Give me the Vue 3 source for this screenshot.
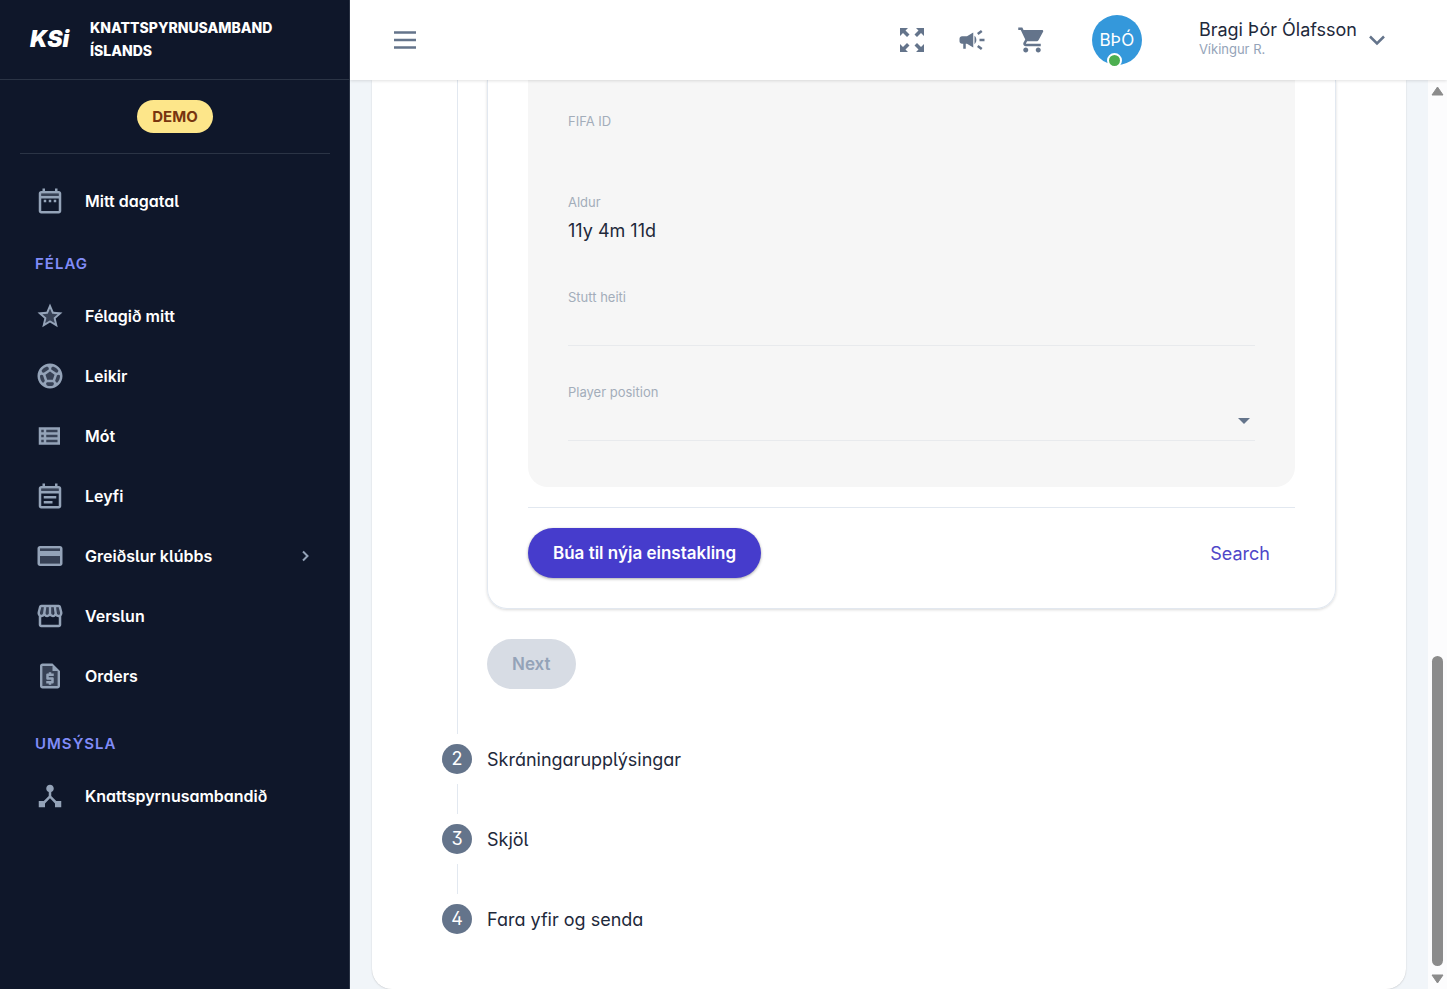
<script setup>
const icons = {
  date: {
    tone: 'M5 6h14v2H5z',
    line: 'M7 11h2v2H7v-2zm14-5v14c0 1.1-.9 2-2 2H5c-1.11 0-2-.9-2-2l.01-14c0-1.1.88-2 1.99-2h1V2h2v2h8V2h2v2h1c1.1 0 2 .9 2 2zM5 8h14V6H5v2zm14 12V10H5v10h14zm-4-7h2v-2h-2v2zm-4 0h2v-2h-2v2z'
  },
  star: {
    tone: 'M12 15.4l-3.76 2.27 1-4.28-3.32-2.88 4.38-.38L12 6.1l1.71 4.04 4.38.38-3.32 2.88 1 4.28z',
    line: 'M22 9.24l-7.19-.62L12 2 9.19 8.63 2 9.24l5.46 4.73L5.82 21 12 17.27 18.18 21l-1.63-7.03L22 9.24zM12 15.4l-3.76 2.27 1-4.28-3.32-2.88 4.38-.38L12 6.1l1.71 4.04 4.38.38-3.32 2.88 1 4.28L12 15.4z'
  },
  ball: {
    tone: 'M12 3a9 9 0 100 18 9 9 0 000-18z',
    line: 'M12 2C6.48 2 2 6.48 2 12s4.48 10 10 10 10-4.48 10-10S17.52 2 12 2zm1 3.3l1.35-.95c1.82.56 3.37 1.76 4.38 3.34l-.39 1.34-1.35.46L13 6.7V5.3zm-3.35-.95L11 5.3v1.4L7.01 9.49l-1.35-.46-.39-1.34c1.01-1.57 2.56-2.77 4.38-3.34zM7.08 17.11l-1.14.1C4.73 15.81 4 13.99 4 12c0-.12.01-.23.02-.35l1-.73 1.38.48 1.46 4.34-.78 1.37zm7.42 2.48c-.79.26-1.63.41-2.5.41s-1.71-.15-2.5-.41l-.69-1.49.64-1.1h5.11l.64 1.11-.7 1.48zM14.27 15H9.73l-1.35-4.02L12 8.44l3.63 2.54L14.27 15zm3.79 2.21l-1.14-.1-.79-1.37 1.46-4.34 1.39-.47 1 .73c.01.11.02.22.02.34 0 1.99-.73 3.81-1.94 5.21z'
  },
  list: {
    tone: 'M4 6h15v12H4z',
    line: 'M3 5v14h17V5H3zm4 2v2H5V7h2zm-2 6v-2h2v2H5zm0 2h2v2H5v-2zm13 2H9v-2h9v2zm0-4H9v-2h9v2zm0-4H9V7h9v2z'
  },
  note: {
    tone: 'M5 6h14v2H5z',
    line: 'M19 4h-1V2h-2v2H8V2H6v2H5c-1.11 0-2 .9-2 2v14c0 1.1.89 2 2 2h14c1.1 0 2-.9 2-2V6c0-1.1-.9-2-2-2zm0 16H5V10h14v10zm0-12H5V6h14v2zM7 12h10v2H7zm0 4h7v2H7z'
  },
  card: {
    tone: 'M4 6h16v12H4z',
    line: 'M20 4H4c-1.11 0-1.99.89-1.99 2L2 18c0 1.11.89 2 2 2h16c1.11 0 2-.89 2-2V6c0-1.11-.89-2-2-2zm0 14H4v-6h16v6zm0-10H4V6h16v2z'
  },
  shop: {
    tone: 'M5 5h2v5l-1 1H4zM9 5h2v5l-1 1H8zM13 5h2v5l-1 1h-1zM17 5h2l1 5-1 1h-1z',
    line: 'M21.9 8.89l-1.05-4.37c-.22-.9-1-1.52-1.91-1.52H5.05c-.9 0-1.69.63-1.9 1.52L2.1 8.89c-.24 1.02-.02 2.06.62 2.88.08.11.19.19.28.29V19c0 1.1.9 2 2 2h14c1.1 0 2-.9 2-2v-6.94c.09-.09.2-.18.28-.28.64-.82.87-1.87.62-2.89zm-2.99-3.9l1.05 4.37c.1.42.01.84-.25 1.17-.14.18-.44.47-.94.47-.61 0-1.14-.49-1.21-1.14L16.98 5l1.93-.01zM13 5h1.96l.54 4.52c.05.39-.07.78-.33 1.07-.22.26-.54.41-.95.41-.67 0-1.22-.59-1.22-1.31V5zM8.49 9.52L9.04 5H11v4.69c0 .72-.55 1.31-1.29 1.31-.34 0-.65-.15-.89-.41-.25-.29-.37-.68-.33-1.07zm-4.45-.16L5.05 5h1.97l-.58 4.86c-.08.65-.6 1.14-1.21 1.14-.49 0-.8-.29-.93-.47-.27-.32-.36-.75-.26-1.17zM5 19v-6.03c.08.01.15.03.23.03.87 0 1.66-.36 2.24-.95.6.6 1.4.95 2.31.95.87 0 1.65-.36 2.23-.93.59.57 1.39.93 2.29.93.84 0 1.64-.35 2.24-.95.58.59 1.37.95 2.24.95.08 0 .15-.02.23-.03V19H5z'
  },
  page: {
    tone: 'M6 4h8l4 4v12H6z',
    line: 'M14 2H6c-1.1 0-1.99.9-1.99 2L4 20c0 1.1.89 2 1.99 2H18c1.1 0 2-.9 2-2V8l-6-6zm4 18H6V4h8v4h4v12zM11 19h2v-1h1c.55 0 1-.45 1-1v-3c0-.55-.45-1-1-1h-3v-1h4v-2h-2V9h-2v1h-1c-.55 0-1 .45-1 1v3c0 .55.45 1 1 1h3v1H9v2h2v1z'
  },
  hub: {
    tone: '',
    line: 'M17 16l-4-4V8.82C14.16 8.4 15 7.3 15 6c0-1.66-1.34-3-3-3S9 4.34 9 6c0 1.3.84 2.4 2 2.82V12l-4 4H3v5h5v-3.05l4-4.2 4 4.2V21h5v-5h-4z'
  }
}

const groups = [
  { title: '', items: [{ label: 'Mitt dagatal', icon: 'date' }] },
  {
    title: 'FÉLAG',
    items: [
      { label: 'Félagið mitt', icon: 'star' },
      { label: 'Leikir', icon: 'ball' },
      { label: 'Mót', icon: 'list' },
      { label: 'Leyfi', icon: 'note' },
      { label: 'Greiðslur klúbbs', icon: 'card', expandable: true },
      { label: 'Verslun', icon: 'shop' },
      { label: 'Orders', icon: 'page' }
    ]
  },
  { title: 'UMSÝSLA', items: [{ label: 'Knattspyrnusambandið', icon: 'hub' }] }
]

const steps = [
  { number: 2, label: 'Skráningarupplýsingar' },
  { number: 3, label: 'Skjöl' },
  { number: 4, label: 'Fara yfir og senda' }
]
</script>

<template>
  <div class="shell">
    <aside class="sidebar">
      <div class="brand">
        <span class="logo">KSi</span>
        <span class="brand-name">KNATTSPYRNUSAMBAND ÍSLANDS</span>
      </div>
      <div class="env"><span class="pill">DEMO</span></div>
      <nav class="nav">
        <section v-for="group in groups" :key="group.title" class="group">
          <h2 v-if="group.title" class="group-title">{{ group.title }}</h2>
          <a v-for="item in group.items" :key="item.label" href="#" class="nav-item">
            <svg class="nav-icon" viewBox="0 0 24 24" aria-hidden="true">
              <path v-if="icons[item.icon].tone" :d="icons[item.icon].tone" opacity=".3" />
              <path :d="icons[item.icon].line" fill-rule="evenodd" />
            </svg>
            <span class="nav-label">{{ item.label }}</span>
            <svg v-if="item.expandable" class="nav-arrow" viewBox="0 0 20 20" aria-hidden="true">
              <path d="M8 5.500l4.500 4.500L8 14.500" />
            </svg>
          </a>
        </section>
      </nav>
    </aside>

    <div class="main">
      <header class="topbar">
        <button class="icon-button" type="button" aria-label="Menu">
          <svg class="menu-icon" viewBox="0 0 30 30"><path d="M4 7.500h22M4 15h22M4 22.500h22" /></svg>
        </button>
        <div class="actions">
          <button class="icon-button" type="button" aria-label="Fullscreen">
            <svg viewBox="0 0 30 30">
              <path d="M3 3h8L8.500 5.500l4 4-2.500 2.500-4-4L3 11zM27 3h-8l2.500 2.500-4 4 2.500 2.500 4-4L27 11zM3 27h8l-2.500-2.500 4-4-2.500-2.500-4 4L3 19zM27 27h-8l2.500-2.500-4-4 2.500-2.500 4 4L27 19z" />
            </svg>
          </button>
          <button class="icon-button" type="button" aria-label="Announcements">
            <svg viewBox="0 0 24 24">
              <path d="M18 11v2h4v-2h-4zM16 17.610c.96.71 2.210 1.650 3.200 2.390.4-.53.8-1.070 1.200-1.600-.99-.74-2.240-1.680-3.200-2.400-.4.54-.8 1.080-1.200 1.610zM20.400 5.600c-.4-.53-.8-1.070-1.200-1.600-.99.74-2.240 1.680-3.200 2.400.4.53.8 1.070 1.200 1.600.96-.72 2.210-1.650 3.200-2.400zM4 9c-1.100 0-2 .9-2 2v2c0 1.100.9 2 2 2h1v4h2v-4h1l5 3V6L8 9H4zM15.500 12c0-1.330-.58-2.530-1.500-3.350v6.690c.92-.81 1.500-2.010 1.500-3.340z" />
            </svg>
          </button>
          <button class="icon-button" type="button" aria-label="Cart">
            <svg viewBox="0 0 24 24">
              <path d="M7 18c-1.100 0-1.990.9-1.990 2S5.900 22 7 22s2-.9 2-2-.9-2-2-2zM1 2v2h2l3.600 7.590-1.350 2.450c-.16.28-.25.61-.25.96 0 1.100.9 2 2 2h12v-2H7.420c-.14 0-.25-.11-.25-.25l.03-.12.9-1.630h7.450c.75 0 1.410-.41 1.750-1.030l3.580-6.490c.08-.14.12-.31.12-.48 0-.55-.45-1-1-1H5.210l-.94-2H1zm16 16c-1.100 0-1.990.9-1.990 2s.89 2 1.990 2 2-.9 2-2-.9-2-2-2z" />
            </svg>
          </button>
        </div>
        <div class="avatar">BÞÓ<span class="status"></span></div>
        <button class="user" type="button">
          <span class="user-text">
            <span class="user-name">Bragi Þór Ólafsson</span>
            <span class="user-club">Víkingur R.</span>
          </span>
          <svg class="user-arrow" viewBox="0 0 20 20" aria-hidden="true"><path d="M3 6.500l7 7 7-7" /></svg>
        </button>
      </header>

      <div class="viewport">
        <main class="page">
          <div class="sheet">
            <div class="step-body">
              <section class="panel">
                <div class="fields">
                  <div class="field">
                    <span class="label">FIFA ID</span>
                    <span class="value-empty"></span>
                  </div>
                  <div class="field">
                    <span class="label">Aldur</span>
                    <span class="value">11y 4m 11d</span>
                  </div>
                  <div class="field">
                    <label class="label" for="short-name">Stutt heiti</label>
                    <input id="short-name" class="control" type="text" />
                  </div>
                  <div class="field">
                    <label class="label" for="position">Player position</label>
                    <div class="select-wrap">
                      <select id="position" class="control"><option value=""></option></select>
                      <svg class="caret" viewBox="0 0 12 6" aria-hidden="true"><path d="M0 0h12L6 6z" /></svg>
                    </div>
                  </div>
                </div>
                <div class="panel-actions">
                  <button class="button primary" type="button">Búa til nýja einstakling</button>
                  <button class="button plain" type="button">Search</button>
                </div>
              </section>
              <button class="button next" type="button" disabled>Next</button>
            </div>
            <template v-for="(step, i) in steps" :key="step.number">
              <div class="step">
                <span class="step-number">{{ step.number }}</span>
                <span class="step-label">{{ step.label }}</span>
              </div>
              <div v-if="i < steps.length - 1" class="step-line"></div>
            </template>
          </div>
        </main>
        <div class="scrollbar" aria-hidden="true">
          <svg class="scroll-arrow" viewBox="0 0 13 10"><path d="M6.500 1L12 9H1z" /></svg>
          <div class="track"><div class="thumb"></div></div>
          <svg class="scroll-arrow" viewBox="0 0 13 10"><path d="M6.500 9L12 1H1z" /></svg>
        </div>
      </div>
    </div>
  </div>
</template>

<style>
body {
  margin: 0;
}
</style>

<style scoped>
.shell {
  display: flex;
  min-height: 100vh;
  background: #f1f5f9;
  color: #1e293b;
  font-family: Inter, "Noto Sans", sans-serif;
  font-size: 18px;
}
.shell *,
.shell *::before {
  box-sizing: border-box;
}
button {
  border: 0;
  padding: 0;
  background: none;
  color: inherit;
  font: inherit;
  cursor: pointer;
}

/* Sidebar */
.sidebar {
  flex: none;
  width: 350px;
  background: #0f172a;
  box-shadow: inset -1px 0 #2b3445;
  color: #fff;
}
.brand {
  display: flex;
  align-items: center;
  height: 80px;
  padding: 0 30px 2px;
  border-bottom: 1px solid #2b3445;
}
.logo {
  flex: none;
  width: 60px;
  font-size: 23px;
  font-weight: 900;
  font-style: italic;
  line-height: 24px;
}
.brand-name {
  font-size: 14px;
  font-weight: 800;
  line-height: 23px;
}
.env {
  display: flex;
  justify-content: center;
  margin: 0 20px;
  padding: 20px 0;
  border-bottom: 1px solid #2b3445;
}
.pill {
  padding: 0 15px;
  border-radius: 17px;
  background: #fde68a;
  color: #78350f;
  font-size: 15px;
  font-weight: 700;
  line-height: 33px;
}
.nav {
  padding-top: 17px;
}
.group + .group {
  padding-top: 22px;
}
.group-title {
  margin: 0 35px 11px;
  color: #818cf8;
  font-size: 15px;
  font-weight: 600;
  letter-spacing: 1px;
  line-height: 22px;
}
.group:last-child {
  padding-top: 27px;
}
.nav-item {
  display: flex;
  align-items: center;
  height: 60px;
  padding: 0 35px;
  color: #fff;
  font-size: 16px;
  font-weight: 600;
  font-feature-settings: "cv05", "cv11";
  text-decoration: none;
}
.nav-icon {
  width: 30px;
  height: 30px;
  margin-right: 20px;
  fill: #94a3b8;
}
.nav-label {
  flex: 1;
}
.nav-arrow {
  width: 20px;
  height: 20px;
  fill: none;
  stroke: #94a3b8;
  stroke-width: 2;
}

/* Top bar */
.main {
  display: flex;
  flex: 1;
  flex-direction: column;
  min-width: 0;
}
.topbar {
  display: flex;
  align-items: center;
  height: 80px;
  padding: 0 60px 0 40px;
  background: #fff;
  box-shadow: 0 1px 3px rgba(0, 0, 0, 0.12);
  z-index: 1;
}
.icon-button {
  width: 30px;
  height: 30px;
}
.icon-button svg {
  display: block;
  width: 30px;
  height: 30px;
  fill: #64748b;
}
.icon-button .menu-icon {
  fill: none;
  stroke: #64748b;
  stroke-width: 2.5;
}
.actions {
  display: flex;
  gap: 30px;
  margin-left: auto;
}
.avatar {
  position: relative;
  width: 50px;
  height: 50px;
  margin-left: 45px;
  border-radius: 50%;
  background: #3498db;
  color: #fff;
  font-size: 17px;
  line-height: 50px;
  text-align: center;
}
.status {
  position: absolute;
  bottom: -3px;
  left: 15px;
  width: 15px;
  height: 15px;
  border: 2px solid #fff;
  border-radius: 50%;
  background: #4caf50;
}
.user {
  display: flex;
  align-items: center;
  gap: 10px;
  margin-left: 57px;
  text-align: left;
}
.user-text {
  display: flex;
  flex-direction: column;
  padding-bottom: 4px;
}
.user-name {
  line-height: 22px;
}
.user-club {
  color: #94a3b8;
  font-size: 13px;
  line-height: 17px;
}
.user-arrow {
  width: 20px;
  height: 20px;
  fill: none;
  stroke: #64748b;
  stroke-width: 2.5;
}

/* Page */
.viewport {
  display: flex;
  flex: 1;
}
.page {
  flex: 1;
  min-width: 0;
  padding: 0 22px;
}
.sheet {
  padding: 0 70px 45px;
  border-radius: 0 0 20px 20px;
  background: #fff;
  box-shadow: 0 0 1px rgba(0, 0, 0, 0.2), 0 1px 2px rgba(0, 0, 0, 0.08);
}
.step-body {
  margin-left: 15px;
  padding: 0 0 45px 29px;
  border-left: 1px solid #e2e8f0;
}
.panel {
  margin-bottom: 30px;
  padding: 0 40px 30px;
  border: 1px solid #e2e8f0;
  border-top: 0;
  border-radius: 0 0 20px 20px;
  box-shadow: 0 1px 3px rgba(0, 0, 0, 0.15);
}
.fields {
  display: flex;
  flex-direction: column;
  gap: 36px;
  padding: 31px 40px 46px;
  border-radius: 0 0 20px 20px;
  background: #f6f6f6;
}
.field {
  display: flex;
  flex-direction: column;
}
.label {
  color: #a3adba;
  font-size: 13px;
  line-height: 20px;
}
.value-empty {
  height: 25px;
}
.value {
  height: 39px;
  line-height: 37px;
}
.control {
  display: block;
  width: 100%;
  height: 39px;
  padding: 0;
  border: 0;
  border-bottom: 1px solid #e8eaed;
  border-radius: 0;
  outline: 0;
  appearance: none;
  background: transparent;
  color: inherit;
  font: inherit;
}
.select-wrap {
  position: relative;
}
.caret {
  position: absolute;
  top: 16px;
  right: 5px;
  width: 12px;
  height: 6px;
  fill: #64748b;
  pointer-events: none;
}
.panel-actions {
  display: flex;
  justify-content: space-between;
  margin-top: 20px;
  padding-top: 20px;
  border-top: 1px solid #e2e8f0;
}
.button {
  height: 50px;
  padding: 0 25px;
  border-radius: 25px;
  font-size: 17px;
  font-weight: 600;
}
.primary {
  background: #463ccc;
  box-shadow: 0 1px 3px rgba(0, 0, 0, 0.35);
  color: #fff;
}
.plain {
  color: #4f46c8;
  font-size: 18px;
  font-weight: 400;
}
.next {
  display: block;
  background: #d7dce4;
  color: #94a3b8;
}
.step {
  display: flex;
  align-items: center;
  gap: 15px;
  height: 50px;
}
.step-number {
  width: 30px;
  height: 30px;
  border-radius: 50%;
  background: #64748b;
  color: #fff;
  font-feature-settings: "cv09", "cv02";
  line-height: 30px;
  text-align: center;
}
.step-label {
  font-feature-settings: "cv05", "cv11";
}
.step-line {
  height: 30px;
  margin-left: 15px;
  border-left: 1px solid #e2e8f0;
}

/* Scroll bar */
.scrollbar {
  display: flex;
  flex: none;
  flex-direction: column;
  align-items: center;
  justify-content: space-between;
  width: 19px;
  padding: 6px 0 5px;
  background: #fcfcfd;
}
.scroll-arrow {
  width: 13px;
  height: 10px;
  fill: #8b8b8b;
  stroke: #8b8b8b;
  stroke-linejoin: round;
}
.track {
  display: flex;
  flex: 1;
  flex-direction: column;
  justify-content: flex-end;
  padding: 8px 0;
}
.thumb {
  width: 11px;
  height: 36%;
  border-radius: 6px;
  background: #8b8b8b;
}
</style>
